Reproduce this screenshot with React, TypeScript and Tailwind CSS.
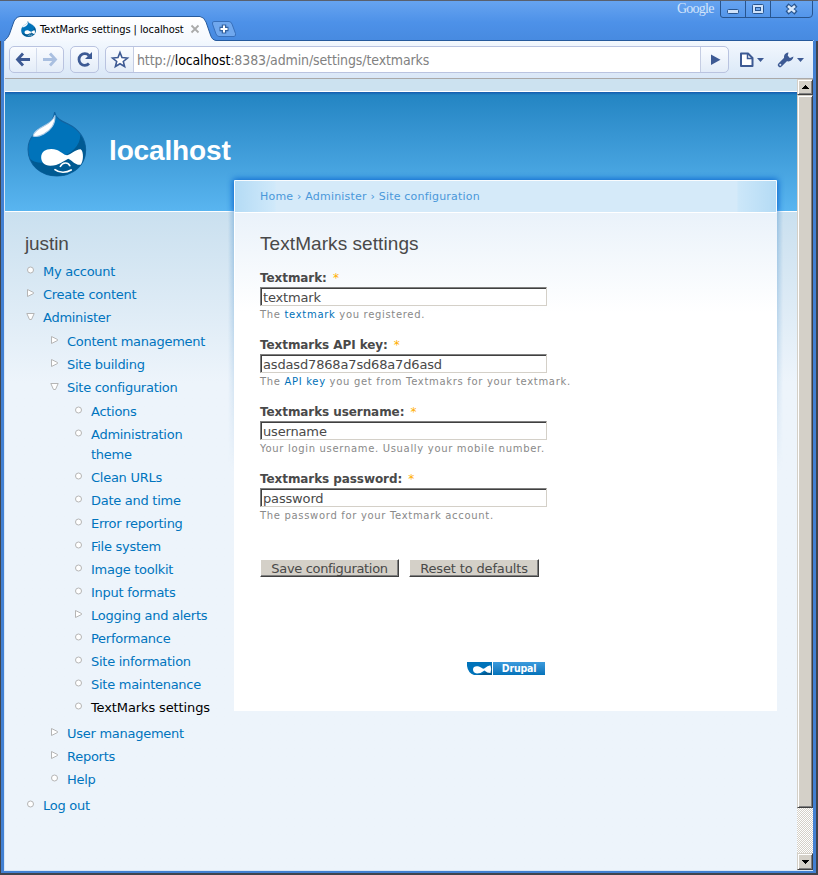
import type { ReactNode } from 'react';

const verdana = "font-['DejaVu_Sans',sans-serif]";
const tahoma = "font-['DejaVu_Sans_Condensed','DejaVu_Sans',sans-serif]";
const arial = "font-['Liberation_Sans',sans-serif]";

function Druplicon({ className }: { className: string }) {
  return (
    <svg viewBox="81 63 178 198" className={className} preserveAspectRatio="none">
      <path
        d="M163 66C166 84 180 92 203 102C236 118 255 147 255 180C255 226 218 258 170 258C121 258 84 224 84 178C84 140 110 123 135 108C155 95 160 85 163 66Z"
        fill="#0073ba"
        stroke="#1263a0"
        strokeWidth="3"
      />
      <path
        d="M239 134C250 148 255 164 255 180C255 226 218 258 170 258C132 258 100 236 90 206C105 224 150 222 180 202C210 192 240 168 239 134Z"
        fill="#005a93"
      />
      <path
        d="M164 76C158 92 146 100 131 108C112 118 101 126 99 138C106 141 120 138 131 132C152 120 166 104 164 76Z"
        fill="#fff"
        stroke="#a9c9e6"
        strokeWidth="3"
      />
      <path
        d="M123 202C123 180 147 172 170 180C184 186 190 195 200 196C212 193 224 179 240 178C250 184 249 216 240 224C226 227 212 209 203 206C190 212 176 227 150 227C132 227 123 216 123 202Z"
        fill="#fff"
      />
      <path d="M180 229C187 217 202 215 208 227" fill="none" stroke="#fff" strokeWidth="5" strokeLinecap="round" />
      <path d="M164 239C176 249 198 249 212 240" fill="none" stroke="#fff" strokeWidth="5" strokeLinecap="round" />
    </svg>
  );
}

function TitleBar() {
  return (
    <div className="relative flex h-[41px] bg-linear-to-b from-[#65a3f0] from-5% via-[#4d91e8] via-55% to-[#478ae0]">
      <svg className="absolute inset-0 h-[41px] w-[818px]" viewBox="0 0 818 41">
        <defs>
          <linearGradient id="tab" x1="0" y1="0" x2="0" y2="1">
            <stop offset="0" stopColor="#fff" />
            <stop offset="1" stopColor="#f4f8fe" />
          </linearGradient>
        </defs>
        <path d="M0 .5H818" stroke="#59606d" />
        <path d="M4 41.5L5.500 39.500Q8 38 9.500 34L13 24Q15 17 20 16.500H200Q204 17 206 22L210.500 35Q212 40 216 40.500H814V42H4Z" fill="url(#tab)" />
        <path d="M4.500 41L5.500 39.500Q8 38 9.500 34L13 24Q15 17 20 16.500H200Q204 17 206 22L210.500 35Q212 40 216 40.500H813" fill="none" stroke="#265a9c" />
        <path d="M214 21.500H229Q231 21.500 232 24L235.500 33.500Q236 36.500 234 36.500H219Q217 36.500 216 34L212.500 24Q212 21.500 214 21.500Z" fill="#70a8ee" stroke="#3870bb" />
        <path d="M224 24.500v9M219.500 29h9" stroke="#34629f" strokeWidth="4.500" />
        <path d="M224 25.500v7M220.500 29h7" stroke="#fff" strokeWidth="2" />
        <path d="M191.500 25.500l7 7m0-7l-7 7" stroke="#aaa" strokeWidth="1.800" />
        <path d="M720.500 1V15Q720.500 17.500 723 17.500H809Q812.500 17.500 812.500 14V1M745.500 1V17M770.500 1V17" fill="none" stroke="#28558f" />
        <rect x="727.500" y="9.500" width="11" height="4" rx="1" fill="#cfe2fa" stroke="#28558f" />
        <rect x="752.500" y="4.500" width="11" height="9" rx="1" fill="#cfe2fa" stroke="#28558f" />
        <rect x="755.500" y="7.500" width="5" height="3" fill="#70a8ee" stroke="#28558f" />
        <path d="M787 5l9 8m0-8l-9 8" stroke="#28558f" strokeWidth="4.500" />
        <path d="M788 6l7 6m0-6l-7 6" stroke="#d9e9fc" strokeWidth="2.500" />
      </svg>
      <div className="relative flex h-[24px] w-full pt-[17px]">
        <Druplicon className="ml-[21px] mt-[4px] h-[16px] w-[15px] shrink-0" />
        <span className={`${tahoma} ml-[4px] mt-[4px] w-[150px] whitespace-nowrap text-[11px] leading-[17px] tracking-[-0.080px] text-black`}>
          TextMarks settings | localhost
        </span>
        <span className="-mt-[17px] ml-[487px] font-['Liberation_Serif',serif] text-[14px] leading-[18px] tracking-[-0.750px] text-[#d2e4fb]">Google</span>
      </div>
    </div>
  );
}

const toolButton = 'flex h-[27px] items-center rounded-[5px] border border-[#b9c3e0] bg-linear-to-b from-[#fafcff] to-[#e3ecf8]';

function Toolbar() {
  return (
    <div className="flex h-[37px] bg-linear-to-b from-[#f3f8fe] to-[#d9e7f7] pl-[4px] pt-[5px]">
      <div className={`${toolButton} w-[55px]`}>
        <svg viewBox="0 0 53 25" className="h-[25px] w-[53px]">
          <path d="M8 12.500H20M13 6.500L7.500 12.500L13 18.500" fill="none" stroke="#3d5a94" strokeWidth="2.800" />
          <path d="M26.500 1V25" stroke="#d3dced" />
          <path d="M33 12.500H45M40 6.500L45.500 12.500L40 18.500" fill="none" stroke="#a9bfe0" strokeWidth="2.800" />
        </svg>
      </div>
      <div className={`${toolButton} ml-[6px] w-[29px]`}>
        <svg viewBox="0 0 27 25" className="h-[25px] w-[27px]">
          <path d="M18 16.500A5.800 5.800 0 1 1 18 8.500" fill="none" stroke="#3d5a94" strokeWidth="2.800" />
          <path d="M21 5V12H14Z" fill="#3d5a94" />
        </svg>
      </div>
      <div className={`${toolButton} ml-[6px] w-[624px] overflow-hidden`}>
        <svg viewBox="0 0 27 25" className="h-[25px] w-[27px] shrink-0">
          <path d="M14 5.500L16 10.500L21.500 11L17.300 14.500L18.600 19.500L14 16.800L9.400 19.500L10.700 14.500L6.500 11L12 10.500Z" fill="#fff" stroke="#3d5a94" strokeWidth="1.600" />
        </svg>
        <div className={`${tahoma} flex h-[25px] w-[568px] items-center whitespace-nowrap border-l border-r border-[#c5cde3] bg-white pl-[3px] pt-[2px] text-[14px] tracking-[-0.120px] text-[#818181]`}>
          http://<span className="text-black">localhost</span>:8383/admin/settings/textmarks
        </div>
        <svg viewBox="0 0 27 25" className="h-[25px] w-[27px]">
          <path d="M10 7.500V18L19.500 12.700Z" fill="#3d5a94" />
        </svg>
      </div>
      <svg viewBox="0 0 80 27" className="h-[27px] w-[80px]">
        <path d="M12 7.500H19L23.500 12V20H12Z" fill="#fff" stroke="#3d5a94" strokeWidth="2" strokeLinejoin="round" />
        <path d="M18.500 7V12.500H24" fill="none" stroke="#3d5a94" strokeWidth="1.500" />
        <path d="M28 12H35L31.500 16Z M68 12H75L71.500 16Z" fill="#3d5a94" />
        <path d="M51 19L58 12" stroke="#3d5a94" strokeWidth="4.500" strokeLinecap="round" />
        <path d="M59.500 6.500C55 7 54 11 56 14C59 17 64 15 64.500 10.500L61 12L58.500 10.500Z" fill="#3d5a94" />
        <circle cx="51.300" cy="18.700" r="1" fill="#dde8f7" />
      </svg>
    </div>
  );
}

const raised = 'border-t border-l border-r border-b border-t-[#d4d0c8] border-l-[#d4d0c8] border-r-[#404040] border-b-[#404040] bg-[#d4d0c8] shadow-[inset_1px_1px_#fff,inset_-1px_-1px_#808080]';

function ScrollBar() {
  return (
    <div className="flex w-[16px] shrink-0 flex-col bg-[repeating-conic-gradient(#d4d0c8_0_25%,#fff_0_50%)] bg-[length:2px_2px]">
      <div className={`flex h-[16px] items-center justify-center ${raised}`}>
        <svg viewBox="0 0 7 4" className="h-[4px] w-[7px]" shapeRendering="crispEdges"><path d="M3 0H4V1H5V2H6V3H7V4H0V3H1V2H2V1H3Z" /></svg>
      </div>
      <div className={`h-[713px] ${raised}`} />
      <div className={`mt-auto flex h-[17px] items-center justify-center ${raised}`}>
        <svg viewBox="0 0 7 4" className="h-[4px] w-[7px]" shapeRendering="crispEdges"><path d="M0 0H7V1H6V2H5V3H4V4H3V3H2V2H1V1H0Z" /></svg>
      </div>
    </div>
  );
}

type Marker = 'leaf' | 'closed' | 'open';

function Bullet({ kind }: { kind: Marker }) {
  return (
    <svg viewBox="0 0 9 9" className="mt-[5px] h-[9px] w-[9px] shrink-0" fill="#fff" stroke="#b5b5b5">
      {kind === 'leaf' && <circle cx="4.500" cy="4" r="3" />}
      {kind === 'closed' && <path d="M1.500 .5L7.500 3.500V4.500L1.500 7.500Z" strokeLinejoin="round" />}
      {kind === 'open' && <path d="M.8 1.500H8.200L5.500 7.500H3.500Z" strokeLinejoin="round" />}
    </svg>
  );
}

function Item({ label, kind = 'leaf', active = false, children }: { label: string; kind?: Marker; active?: boolean; children?: ReactNode }) {
  return (
    <li>
      <div className="flex pb-[2px]">
        <Bullet kind={kind} />
        <a className={`ml-[8px] pt-[1px] leading-[20px] ${active ? 'tracking-[-0.120px] text-black' : 'text-[#0074be]'}`}>{label}</a>
      </div>
      {children && <ul className="mb-[3px] ml-[24px] mt-[1px]">{children}</ul>}
    </li>
  );
}

function Sidebar() {
  return (
    <aside className="w-[210px] shrink-0 pl-[20px] pt-[21px]">
      <h2 className={`${arial} text-[19px] leading-[22px] tracking-[-0.100px] text-[#494949]`}>justin</h2>
      <ul className={`${verdana} ml-[1px] mt-[6px] text-[13px] tracking-[-0.270px]`}>
        <Item label="My account" />
        <Item label="Create content" kind="closed" />
        <Item label="Administer" kind="open">
          <Item label="Content management" kind="closed" />
          <Item label="Site building" kind="closed" />
          <Item label="Site configuration" kind="open">
            <Item label="Actions" />
            <Item label="Administration theme" />
            <Item label="Clean URLs" />
            <Item label="Date and time" />
            <Item label="Error reporting" />
            <Item label="File system" />
            <Item label="Image toolkit" />
            <Item label="Input formats" />
            <Item label="Logging and alerts" kind="closed" />
            <Item label="Performance" />
            <Item label="Site information" />
            <Item label="Site maintenance" />
            <Item label="TextMarks settings" active />
          </Item>
          <Item label="User management" kind="closed" />
          <Item label="Reports" kind="closed" />
          <Item label="Help" />
        </Item>
        <Item label="Log out" />
      </ul>
    </aside>
  );
}

function Field({ label, value, children }: { label: string; value: string; children: ReactNode }) {
  return (
    <div className="h-[67px]">
      <label className="block h-[19px] text-[12px] font-bold leading-[20px] tracking-[-0.080px] text-[#494949]">
        {label}: <span className="ml-[2px] font-normal text-[#ffae00]">*</span>
      </label>
      <input
        readOnly
        value={value}
        className="block h-[19px] w-[287px] border border-b-[#d4d0c8] border-l-[#808080] border-r-[#d4d0c8] border-t-[#808080] bg-white pl-[2px] pt-px text-[13px] leading-[16px] tracking-[-0.160px] text-[#494949] shadow-[inset_1px_1px_#404040] outline-none"
      />
      <p className="mt-px whitespace-nowrap text-[10px] leading-[16px] tracking-[0.680px] text-[#898989]">{children}</p>
    </div>
  );
}

const formButton = 'h-[18px] whitespace-nowrap border border-t-white border-l-white border-r-[#404040] border-b-[#404040] bg-[#d4d0c8] text-center text-[13px] leading-[17px] text-[#494949] shadow-[inset_-1px_-1px_#808080]';

function Content() {
  return (
    <main className={`${verdana} relative ml-[19px] -mt-[32px] h-[531px] w-[543px]`}>
      <div className="absolute -left-[6px] top-[32px] h-[260px] w-[6px] bg-linear-to-l from-[#78add9]/60 to-transparent [mask-image:linear-gradient(#000,transparent)]" />
      <div className="absolute left-[543px] top-[32px] h-[260px] w-[6px] bg-linear-to-r from-[#78add9]/60 to-transparent [mask-image:linear-gradient(#000,transparent)]" />
      <nav className="h-[32px] rounded-t-[1px] border border-b-0 border-white/90 bg-[linear-gradient(90deg,#b4dbf5,#d0e9fa_40px,#d5eaf9_41px,#d5eaf9_502px,#cce7f9_503px,#b4dbf5)] pl-[25px] pt-[6px] text-[11px] leading-[20px] tracking-[0.200px] text-[#4a98d9] shadow-[0_0_6px_1px_#0864cf] [clip-path:inset(-8px_-8px_0_-8px)]">
        Home › Administer › Site configuration
      </nav>
      <div className="h-[499px] border-l border-t border-white bg-linear-to-b from-[#eaf2fa] to-white to-[100px] pl-[25px]">
        <h1 className={`${arial} pt-[20px] text-[19px] leading-[22px] tracking-[0.070px] text-[#494949]`}>TextMarks settings</h1>
        <div className="pt-[13px]">
          <Field label="Textmark" value="textmark">The <a className="text-[#0071b8]">textmark</a> you registered.</Field>
          <Field label="Textmarks API key" value="asdasd7868a7sd68a7d6asd">The <a className="text-[#0071b8]">API key</a> you get from Textmakrs for your textmark.</Field>
          <Field label="Textmarks username" value="username">Your login username. Usually your mobile number.</Field>
          <Field label="Textmarks password" value="password">The password for your Textmark account.</Field>
        </div>
        <div className="mt-[23px] flex gap-[10px]">
          <button className={`${formButton} w-[139px] tracking-[-0.330px]`}>Save configuration</button>
          <button className={`${formButton} w-[130px] tracking-[-0.150px]`}>Reset to defaults</button>
        </div>
        <div className="ml-[207px] mt-[85px] flex h-[13px] w-[78px] gap-[1px]">
          <svg viewBox="0 0 25 13" className="h-[13px] w-[25px]">
            <path d="M0 0H25V13H7Q1 11 0 4Z" fill="#0073ba" />
            <path d="M25 4V13H9Q20 12 25 4Z" fill="#005a93" />
            <path d="M6 7.500C6 3.500 11 3.500 14 5.500Q16 7.500 18 6Q21 3 23.500 3.500Q25 7 23.500 11Q20 11 17.500 8.500Q14 11.500 10 11.500Q6 11 6 7.500Z" fill="#fff" />
          </svg>
          <span className="h-[13px] w-[52px] bg-linear-to-b from-[#3b9bdd] to-[#0073ba] text-center text-[10.500px] font-bold leading-[12px] tracking-[-0.200px] text-white font-['DejaVu_Sans_Condensed','DejaVu_Sans',sans-serif]">Drupal</span>
        </div>
      </div>
    </main>
  );
}

export default function App() {
  return (
    <div className="flex h-[875px] w-[818px] flex-col overflow-hidden bg-[#4786da]">
      <TitleBar />
      <div className="flex h-[834px] border-b-2 border-l border-r-2 border-[#40444c]">
        <div className="h-[832px] w-full border-x-[3px] border-b-[3px] border-[#4280d2]">
          <div className="flex h-[830px] flex-col border-b border-l border-[#d7e6f5]">
            <Toolbar />
            <div className="flex h-[792px] border-t border-[#aaa9a9]">
              <div className="flex w-[792px] shrink-0 flex-col overflow-hidden bg-[#edf4fb]">
                <div className="h-[13px] shrink-0 border-b border-white bg-[#cce2f0]" />
                <header className="h-[119px] shrink-0 bg-linear-to-b from-[#1459ae] via-[#2385c3] via-[3px] to-[#59b5f0] pl-[22px] pt-[19px]">
                  <div className="flex">
                    <Druplicon className="h-[66px] w-[60px]" />
                    <h1 className={`${arial} ml-[22px] mt-[24px] text-[28px] font-bold leading-[32px] tracking-[-0.150px] text-white`}>localhost</h1>
                  </div>
                </header>
                <div className="flex h-[660px] border-t border-white bg-linear-to-b from-[#cae0ef] to-[#edf4fb] to-[170px]">
                  <Sidebar />
                  <Content />
                </div>
              </div>
              <ScrollBar />
            </div>
          </div>
        </div>
      </div>
    </div>
  );
}
